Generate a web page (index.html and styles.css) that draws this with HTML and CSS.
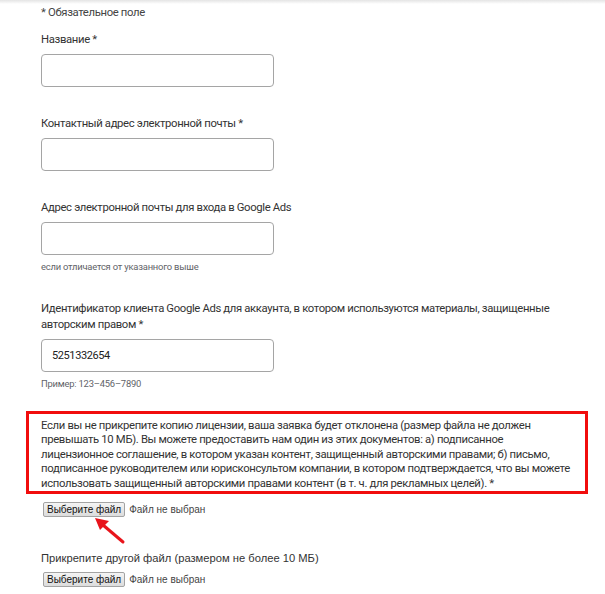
FILE: index.html
```html
<!DOCTYPE html>
<html lang="ru">
<head>
<meta charset="utf-8">
<link rel="stylesheet" href="styles.css">
</head>
<body>
<div class="shade"></div>
<main class="form">
  <div class="fieldset">
    <p class="required-note">* Обязательное поле</p>
    <div class="field first">
      <label class="label">Название *</label>
      <div class="input"></div>
    </div>
    <div class="field">
      <label class="label">Контактный адрес электронной почты *</label>
      <div class="input"></div>
    </div>
    <div class="field">
      <label class="label">Адрес электронной почты для входа в Google Ads</label>
      <div class="input"></div>
      <p class="hint">если отличается от указанного выше</p>
    </div>
    <div class="field after-hint">
      <label class="label">Идентификатор клиента Google Ads для аккаунта, в котором используются материалы, защищенные авторским правом *</label>
      <div class="input">5251332654</div>
      <p class="hint">Пример: 123–456–7890</p>
    </div>
  </div>

  <div class="notice">Если вы не прикрепите копию лицензии, ваша заявка будет отклонена (размер файла не должен превышать 10 МБ). Вы можете предоставить нам один из этих документов: а) подписанное лицензионное соглашение, в котором указан контент, защищенный авторскими правами; б) письмо, подписанное руководителем или юрисконсультом компании, в котором подтверждается, что вы можете использовать защищенный авторскими правами контент (в т. ч. для рекламных целей). *</div>

  <div class="upload first-upload">
    <span class="file-btn">Выберите файл</span>
    <span class="file-status">Файл не выбран</span>
    <svg class="arrow" width="50" height="40" viewBox="0 0 50 40">
      <line x1="38" y1="30" x2="18" y2="13" stroke="#e8141b" stroke-width="3" stroke-linecap="round"/>
      <polygon points="10,6 24,9 15,18" fill="#e8141b"/>
    </svg>
  </div>

  <p class="upload-label">Прикрепите другой файл (размером не более 10 МБ)</p>
  <div class="upload">
    <span class="file-btn">Выберите файл</span>
    <span class="file-status">Файл не выбран</span>
  </div>
</main>
</body>
</html>
```

FILE: styles.css
```css
html, body {
  margin: 0;
  padding: 0;
  background: #fff;
}
body {
  font-family: Roboto, "Noto Sans", Arial, sans-serif;
  color: #333;
  width: 605px;
  height: 594px;
  overflow: hidden;
  position: relative;
}
.shade {
  height: 4px;
  background: linear-gradient(#e4e4e4, #ffffff);
}
.form {
  margin-left: 26px;
  width: 562px;
  display: flex;
  flex-direction: column;
  position: relative;
}
.fieldset {
  padding-left: 15px;
  display: flex;
  flex-direction: column;
}
.required-note {
  margin: 1px 0 0;
  font-size: 11.3px;
  letter-spacing: -0.35px;
  line-height: 16px;
  color: #444;
}
.field {
  display: flex;
  flex-direction: column;
  margin-top: 29px;
}
.field.first {
  margin-top: 11px;
}
.field.after-hint {
  margin-top: 27px;
}
.label {
  font-size: 11.3px;
  letter-spacing: -0.35px;
  line-height: 16px;
  color: #333;
  max-width: 540px;
}
.input {
  margin-top: 6px;
  width: 221px;
  height: 31px;
  border: 1px solid #a5a5a5;
  border-radius: 4px;
  font-size: 11px;
  letter-spacing: -0.4px;
  line-height: 31px;
  padding-left: 10px;
  color: #222;
}
.hint {
  margin: 5px 0 0;
  font-size: 9.4px;
  letter-spacing: -0.2px;
  line-height: 14px;
  color: #5f6368;
}
.notice {
  margin-top: 20px;
  border: 3px solid #f10d0d;
  padding: 5px 14px 0 12px;
  height: 72px;
  font-size: 11.3px;
  letter-spacing: -0.33px;
  line-height: 14.4px;
  color: #333;
}
.upload {
  display: flex;
  align-items: center;
  gap: 4px;
  padding-left: 17px;
  font-family: "Liberation Sans", Arial, sans-serif;
  font-size: 10px;
  position: relative;
}
.first-upload {
  margin-top: 8px;
}
.file-btn {
  display: inline-block;
  height: 13px;
  line-height: 13px;
  padding: 0 3px;
  border: 1px solid #a3a3a3;
  border-radius: 2px;
  background: linear-gradient(#f4f4f4, #dcdcdc);
  color: #111;
}
.file-status {
  color: #444;
}
.upload-label {
  margin: 34px 0 0 15px;
  font-family: "Liberation Sans", Arial, sans-serif;
  font-size: 11.2px;
  line-height: 15px;
  color: #333;
}
.upload-label + .upload {
  margin-top: 6px;
}
.arrow {
  position: absolute;
  left: 59px;
  top: 10px;
}
```
